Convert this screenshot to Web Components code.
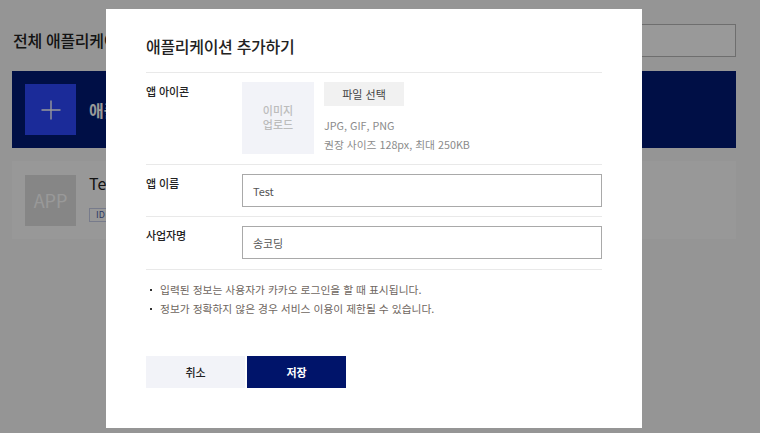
<!DOCTYPE html>
<html lang="ko"><head><meta charset="utf-8"><style>
html,body{margin:0;padding:0;width:760px;height:433px;overflow:hidden;background:#f8f9f8;font-family:"Noto Sans CJK KR","Noto Sans",sans-serif}
</style></head><body>
<template id="bg-t"><style>
:host{display:flex;flex-direction:column;width:760px;height:433px;box-sizing:border-box;padding:23px 24px 0 12px;background:#f8f9f8;color:#222}
.top{display:flex;justify-content:space-between;align-items:center;height:34px;margin-bottom:14px}
h2{margin:0 0 0 1px;font-size:16px;font-weight:500;line-height:32px;letter-spacing:-.3px}
.search{width:420px;height:33px;box-sizing:border-box;border:1px solid #b8b8b8;background:#fff}
.add{display:flex;align-items:center;gap:13px;height:77px;box-sizing:border-box;padding:0 13px;background:#001a75;color:#fff;font-size:16px;font-weight:700}
.tile{width:51px;height:51px;background:#2d49ff;display:flex;align-items:center;justify-content:center}
.app{display:flex;align-items:center;gap:13px;height:78px;box-sizing:border-box;padding:0 13px;margin-top:13px;background:#fefefe}
.pic{width:51px;height:51px;background:#e0e0e0;color:#fff;font:400 18px "Noto Sans CJK KR",sans-serif;display:flex;align-items:center;justify-content:center}
.title{font-size:16px;font-weight:400;line-height:22px;margin:-5px 0 5px}
.id{border:1px solid #c6cde8;color:#4b5ea8;font-size:9px;line-height:12px;padding:0 6px;display:inline-block}
</style>
<div class="top"><h2>전체 애플리케이션</h2><div class="search"></div></div>
<div class="add"><span class="tile"><svg width="22" height="22" viewBox="0 0 22 22"><path d="M11 1.500V20.500M1.500 11H20.500" stroke="#fff" stroke-width="1.400" fill="none"/></svg></span><span>애플리케이션 추가하기</span></div>
<div class="app"><span class="pic">APP</span><div><div class="title">Test</div><span class="id">ID 000000</span></div></div>
</template>
<template id="row-t"><style>
:host{display:grid;grid-template-columns:96px 360px;border-top:1px solid #e9e9e9;box-sizing:border-box;padding:9px 0}
.l{font-size:11px;font-weight:500;line-height:18px;color:#222;letter-spacing:-.1px}
</style><div class="l"><slot name="label"></slot></div><div><slot></slot></div></template>
<template id="input-t"><style>
:host{display:flex;align-items:center;height:33px;box-sizing:border-box;border:1px solid #a9a9a9;padding:1px 10px 0;font-size:11px;font-weight:400;letter-spacing:-.1px;color:#555;background:#fff}
</style><slot></slot></template>
<template id="modal-t"><style>
:host{position:absolute;left:106px;top:9px;width:536px;height:419px;box-sizing:border-box;padding:26px 40px 0;background:#fff;z-index:2}
h1{margin:0;font-size:16px;font-weight:500;line-height:22px;height:37px;color:#222;letter-spacing:-.3px}
.up{display:flex;gap:10px}
.thumb{width:72px;height:72px;padding-bottom:2px;box-sizing:border-box;background:#f2f3f8;color:#bcbcbc;font-size:11px;font-weight:500;line-height:14px;display:flex;align-items:center;justify-content:center;text-align:center}
.file{width:80px;height:24px;background:#f1f1f1;color:#444;font-size:11px;display:flex;align-items:center;justify-content:center}
.hint{margin-top:10px;font-size:10.750px;line-height:19px;color:#8b8b8b}
.rows{border-bottom:1px solid #e9e9e9}
ul{list-style:none;margin:10px 0 0;padding:0;font-size:10.750px;line-height:19px;color:#6e6660}
li{position:relative;padding-left:14px}
li::before{content:"";position:absolute;left:4px;top:9px;width:2px;height:2px;background:#333}
.btns{display:flex;gap:2px;margin-top:38px}
.btn{width:99px;height:32px;display:flex;align-items:center;justify-content:center;font-size:11px;font-weight:500;background:#f2f3f8;color:#222}
.btn.p{background:#00146a;color:#fff;font-weight:700}
</style>
<h1>애플리케이션 추가하기</h1>
<div class="rows">
<form-row style="height:92px"><span slot="label">앱 아이콘</span><div class="up"><div class="thumb">이미지<br>업로드</div><div><div class="file">파일 선택</div><div class="hint">JPG, GIF, PNG<br>권장 사이즈 128px, 최대 250KB</div></div></div></form-row>
<form-row style="height:52px"><span slot="label">앱 이름</span><text-field>Test</text-field></form-row>
<form-row style="height:53px"><span slot="label">사업자명</span><text-field>송코딩</text-field></form-row>
</div>
<ul><li>입력된 정보는 사용자가 카카오 로그인을 할 때 표시됩니다.</li><li>정보가 정확하지 않은 경우 서비스 이용이 제한될 수 있습니다.</li></ul>
<div class="btns"><div class="btn">취소</div><div class="btn p">저장</div></div>
</template>
<template id="scrim-t"><style>:host{position:absolute;inset:0;background:rgba(0,0,0,.4);z-index:1}</style></template>
<app-page></app-page><modal-scrim></modal-scrim><add-modal></add-modal>
<script>
const def=(n,t)=>customElements.define(n,class extends HTMLElement{constructor(){super();this.attachShadow({mode:"open"}).append(document.getElementById(t).content.cloneNode(true))}});
def("form-row","row-t");def("text-field","input-t");def("app-page","bg-t");def("modal-scrim","scrim-t");def("add-modal","modal-t");
</script>
</body></html>
